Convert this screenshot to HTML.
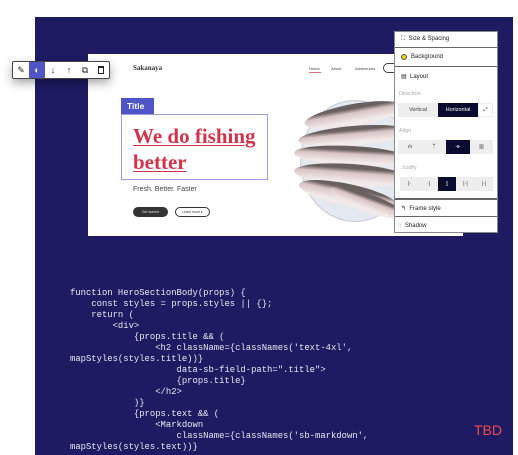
<!DOCTYPE html>
<html><head><style>
*{margin:0;padding:0;box-sizing:border-box}
body{width:518px;height:455px;background:#fff;position:relative;overflow:hidden;font-family:"Liberation Sans",sans-serif}
.a{position:absolute}
.bg{left:35px;top:17px;width:478px;height:438px;background:#1e1b62}
.page{left:88px;top:54px;width:375px;height:182px;background:#fff}
.code{left:70px;top:288px;font-family:"Liberation Mono",monospace;font-size:8.9px;line-height:11px;color:#e8e8f0;white-space:pre}
.tb{left:12px;top:61px;width:98px;height:18px;background:#fff;border:1px solid #444;border-radius:2px;box-shadow:0 4px 10px rgba(0,0,0,.35);display:flex}
.tb div{width:16px;height:16px;display:flex;align-items:center;justify-content:center;font-size:9px;color:#222}
.panel{left:394px;top:31px;width:104px;height:202px;background:#fff;border:1px solid #888;font-size:6px;color:#222}
.row{position:absolute;left:0;width:102px;border-bottom:1px solid #666;padding-left:6px;display:flex;align-items:center}
.lbl{position:absolute;left:4px;color:#aaa;font-size:5.5px}
.seg{position:absolute;display:flex;background:#eee;height:14px}
.seg div{display:flex;align-items:center;justify-content:center;font-size:5.5px;color:#444}
.seg .on{background:#0b0b30;color:#fff}
.fish{position:absolute;border-radius:50%;background:linear-gradient(#6a6060 0 20%,#d8c4c4 40%,#f2eaea 80%)}
</style></head><body>
<div class="a bg"></div>
<div class="a page">
  <div class="a" style="left:45px;top:10px;font-family:'Liberation Serif',serif;font-weight:bold;font-size:7px;color:#333">Sakanaya</div>
  <div class="a" style="left:221px;top:12px;font-size:4px;color:#444">Home</div>
  <div class="a" style="left:221px;top:18px;width:12px;height:1px;background:#e07080"></div>
  <div class="a" style="left:243px;top:12px;font-size:4px;color:#444">About</div>
  <div class="a" style="left:267px;top:12px;font-size:4px;color:#444">Adventures</div>
  <div class="a" style="left:295px;top:9px;width:20px;height:10px;border:1px solid #444;border-radius:6px"></div>
  <div class="a" style="left:33px;top:44px;width:33px;height:16px;background:#4f55c7;color:#fff;font-size:8.5px;font-weight:bold;padding:3px 0 0 6px">Title</div>
  <div class="a" style="left:33px;top:60px;width:147px;height:66px;border:1px solid #9a9ee0"></div>
  <div class="a" style="left:45px;top:69px;font-family:'Liberation Serif',serif;font-weight:bold;font-size:21px;line-height:26px;color:#d0344a;text-decoration:underline;text-decoration-thickness:1px;text-underline-offset:2px">We do fishing<br>better</div>
  <div class="a" style="left:45px;top:132px;font-size:7px;color:#444">Fresh. Better. Faster</div>
  <div class="a" style="left:45px;top:153px;width:35px;height:10px;background:#333;border-radius:6px;color:#ddd;font-size:3.5px;text-align:center;line-height:10px">Get started</div>
  <div class="a" style="left:87px;top:153px;width:35px;height:10px;border:1px solid #333;border-radius:6px;color:#333;font-size:3.5px;text-align:center;line-height:8px">Learn more ▸</div>
  <div class="a" style="left:212px;top:46px;width:110px;height:122px;border-radius:50%;background:#e4e8ef;border:1px solid #c8ccd8"></div>
  <div class="fish" style="left:216px;top:50px;width:100px;height:22px;transform:rotate(-10deg)"></div>
  <div class="fish" style="left:210px;top:72px;width:110px;height:20px;transform:rotate(-5deg)"></div>
  <div class="fish" style="left:206px;top:92px;width:115px;height:20px;transform:rotate(3deg)"></div>
  <div class="fish" style="left:206px;top:110px;width:115px;height:22px;transform:rotate(4deg)"></div>
  <div class="fish" style="left:210px;top:130px;width:100px;height:22px;transform:rotate(12deg)"></div>
  <div class="fish" style="left:240px;top:140px;width:80px;height:18px;transform:rotate(20deg)"></div>
</div>
<div class="a tb">
  <div>✎</div><div style="background:#4f55c7;color:#fff">◐</div><div>↓</div><div>↑</div><div>⧉</div><div><span style="display:block;width:6px;height:8px;border:1px solid #222;border-top-width:2px"></span></div>
</div>
<div class="a panel">
  <div class="row" style="top:0;height:16px">⛶&nbsp; Size &amp; Spacing</div>
  <div class="row" style="top:16px;height:19px"><span style="display:inline-block;width:6px;height:6px;border-radius:50%;background:#f5d000;border:1px solid #555;margin-right:4px"></span>Background</div>
  <div class="row" style="top:35px;height:132px;align-items:flex-start;padding-top:6px">▤&nbsp; Layout</div>
  <div class="lbl" style="top:59px">Direction</div>
  <div class="seg" style="left:3px;top:71px;width:95px"><div style="width:40px">Vertical</div><div class="on" style="width:40px">Horizontal</div><div style="width:15px;background:#fff;border:1px solid #eee">⤢</div></div>
  <div class="lbl" style="top:96px">Align</div>
  <div class="seg" style="left:3px;top:108px;width:95px"><div style="width:24px">ılı</div><div style="width:24px">ᛘ</div><div class="on" style="width:24px">⟛</div><div style="width:23px">▥</div></div>
  <div class="lbl" style="top:133px;left:6px">Justify</div>
  <div class="seg" style="left:5px;top:145px;width:93px"><div style="width:19px">|·</div><div style="width:19px">·|</div><div class="on" style="width:18px">▯</div><div style="width:19px">|·|</div><div style="width:18px">|·|</div></div>
  <div class="row" style="top:167px;height:18px;border-top:1px solid #666">↰&nbsp; Frame style</div>
  <div class="row" style="top:186px;height:15px;border-bottom:none;padding-left:3px">◌&nbsp; Shadow</div>
</div>
<div class="a code">function HeroSectionBody(props) {
    const styles = props.styles || {};
    return (
        &lt;div&gt;
            {props.title &amp;&amp; (
                &lt;h2 className={classNames('text-4xl',
mapStyles(styles.title))}
                    data-sb-field-path=".title"&gt;
                    {props.title}
                &lt;/h2&gt;
            )}
            {props.text &amp;&amp; (
                &lt;Markdown
                    className={classNames('sb-markdown',
mapStyles(styles.text))}</div>
<div class="a" style="left:474px;top:422px;font-size:14px;color:#f04a4a">TBD</div>
</body></html>
